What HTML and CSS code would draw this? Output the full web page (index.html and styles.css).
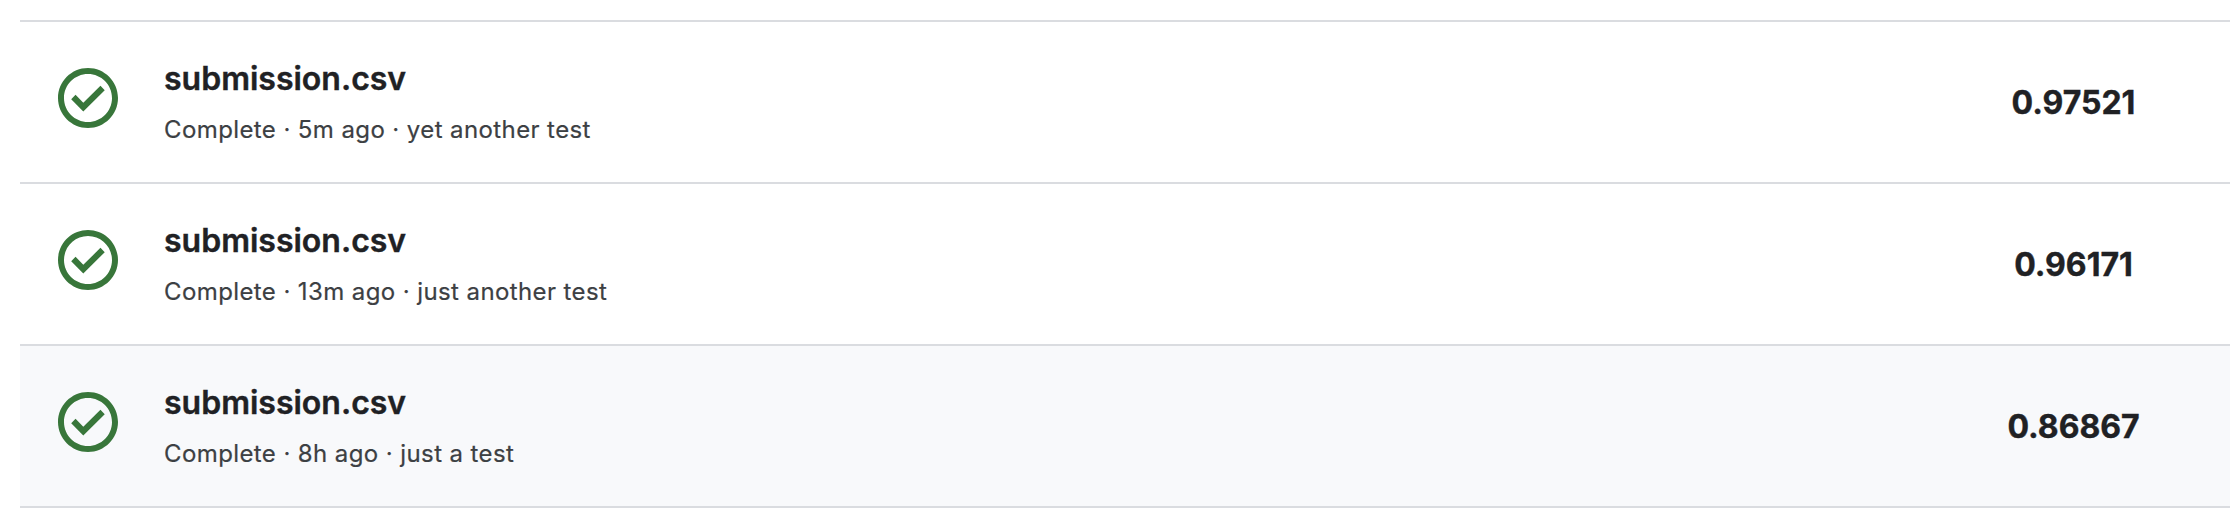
FILE: index.html
```html
<!DOCTYPE html>
<html lang="en">
<head><meta charset="utf-8"><title>Submissions</title><link rel="stylesheet" href="styles.css"></head>
<body>
<svg class="sprite"><symbol id="check" viewBox="0 0 24 24"><path d="M16.15 7.95L10.43 13.6 7.85 10.95 6.4 12.4l4.03 4.1 7.15-7.1zM12 2C6.480 2 2 6.480 2 12s4.480 10 10 10 10-4.480 10-10S17.520 2 12 2zm0 18c-4.420 0-8-3.580-8-8s3.580-8 8-8 8 3.580 8 8-3.580 8-8 8z"/></symbol></svg>
<ul class="list">
<li class="row"><svg class="icon"><use href="#check"/></svg><div class="info"><div class="title">submission.csv</div><div class="meta">Complete · 5m ago · yet another test</div></div><div class="score">0.97521</div></li>
<li class="row"><svg class="icon"><use href="#check"/></svg><div class="info"><div class="title">submission.csv</div><div class="meta">Complete · 13m ago · just another test</div></div><div class="score">0.96171</div></li>
<li class="row active"><svg class="icon"><use href="#check"/></svg><div class="info"><div class="title">submission.csv</div><div class="meta">Complete · 8h ago · just a test</div></div><div class="score">0.86867</div></li>
</ul>
</body>
</html>
```
FILE: styles.css
```css
body { margin: 0; background: #fff; color: #202124; font-family: Inter, sans-serif; overflow: hidden; }
.sprite { display: none; }
.list { list-style: none; margin: 20px 0 0 20px; padding: 0; border-top: 2px solid #dadce0; }
.row { display: flex; height: 160px; border-bottom: 2px solid #dadce0; }
.active { background: #f8f9fb; }
.icon { width: 72px; height: 72px; margin: 40px 40px 0 32px; fill: #38763a; flex: none; }
.info { flex: 1; padding-top: 37px; }
.title { font-size: 32px; line-height: 40px; font-weight: 600; -webkit-text-stroke: .4px; }
.meta { font-size: 24px; line-height: 32px; margin-top: 15px; letter-spacing: .4px; color: #3c4043; -webkit-text-stroke: .2px; }
.score { width: 313px; text-align: center; font-size: 32px; line-height: 162px; font-weight: 700; -webkit-text-stroke: .4px; }
```
